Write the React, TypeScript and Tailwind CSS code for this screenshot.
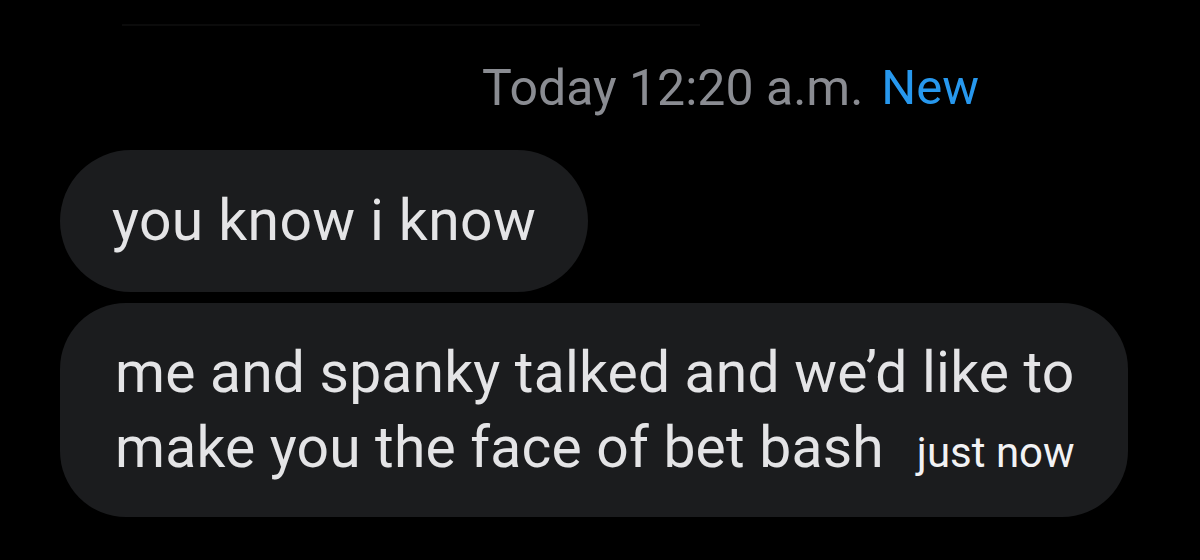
import React from "react";

export default function App() {
  return (
    <div
      className="w-[1200px] h-[560px] bg-black overflow-hidden flex flex-col"
      style={{ fontFamily: "Roboto, 'Liberation Sans', sans-serif" }}
    >
      <div className="mt-[24px] ml-[122px] w-[578px] h-[2px] bg-[#0b0b0b]" />
      <div className="mt-[37px] h-[50px] flex items-start pl-[482px] text-[50px] leading-[50px]">
        <span className="text-[#8a8c92]">Today 12:20 a.m.</span>
        <span className="ml-[18px] text-[#2798ee] text-[49px]">New</span>
      </div>
      <div className="mt-[37px] pl-[60px] flex flex-col items-start gap-[11px]">
        <div className="h-[142px] rounded-full bg-[#1b1c1e] pl-[52px] pr-[52px] pt-[33px] text-[57px] leading-[75px] tracking-[0.4px] text-[#e4e4e6]">
          you know i know
        </div>
        <div className="w-[1068px] h-[214px] rounded-[66px] bg-[#1b1c1e] pl-[55px] pr-[52px] pt-[32px] text-[57px] leading-[75px] tracking-[0.2px] text-[#e4e4e6]">
          <div className="whitespace-nowrap">me and spanky talked and we’d like to</div>
          <div className="flex items-baseline whitespace-nowrap">
            <span>make you the face of bet bash</span>
            <span className="ml-[33px] text-[42px] tracking-[0px] text-[#f2f2f4]">just now</span>
          </div>
        </div>
      </div>
    </div>
  );
}
